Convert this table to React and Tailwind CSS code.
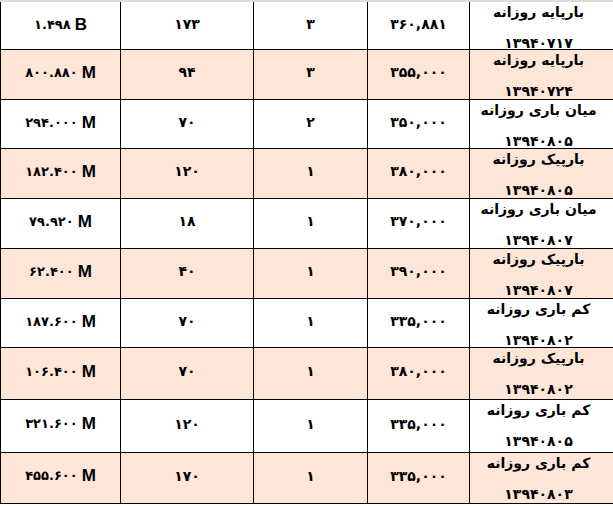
const rows = [
  ["۱.۴۹۸", "B", "۱۷۳", "۳", "۳۶۰,۸۸۱", "بارپایه روزانه", "۱۳۹۴۰۷۱۷", 48],
  ["۸۰۰.۸۸۰", "M", "۹۴", "۳", "۳۵۵,۰۰۰", "بارپایه روزانه", "۱۳۹۴۰۷۲۴", 50],
  ["۲۹۴.۰۰۰", "M", "۷۰", "۲", "۳۵۰,۰۰۰", "میان باری روزانه", "۱۳۹۴۰۸۰۵", 49],
  ["۱۸۲.۴۰۰", "M", "۱۲۰", "۱", "۳۸۰,۰۰۰", "بارپیک روزانه", "۱۳۹۴۰۸۰۵", 50],
  ["۷۹.۹۲۰", "M", "۱۸", "۱", "۳۷۰,۰۰۰", "میان باری روزانه", "۱۳۹۴۰۸۰۷", 50],
  ["۶۲.۴۰۰", "M", "۴۰", "۱", "۳۹۰,۰۰۰", "بارپیک روزانه", "۱۳۹۴۰۸۰۷", 50],
  ["۱۸۷.۶۰۰", "M", "۷۰", "۱", "۳۳۵,۰۰۰", "کم باری روزانه", "۱۳۹۴۰۸۰۲", 49],
  ["۱۰۶.۴۰۰", "M", "۷۰", "۱", "۳۸۰,۰۰۰", "بارپیک روزانه", "۱۳۹۴۰۸۰۲", 52],
  ["۳۲۱.۶۰۰", "M", "۱۲۰", "۱", "۳۳۵,۰۰۰", "کم باری روزانه", "۱۳۹۴۰۸۰۵", 53],
  ["۴۵۵.۶۰۰", "M", "۱۷۰", "۱", "۳۳۵,۰۰۰", "کم باری روزانه", "۱۳۹۴۰۸۰۳", 51],
];

export default function App() {
  return (
    <div
      className="w-[613px] h-[506px] bg-white overflow-hidden text-black"
      style={{ fontFamily: '"DejaVu Sans", sans-serif' }}
    >
      <div className="h-[2px] bg-[#dcdcdc]" />
      {rows.map((r, i) => {
        const bg = i % 2 === 1 ? "bg-[#fde6d8]" : "bg-white";
        return (
          <div
            key={i}
            className={`grid grid-cols-[121px_133px_114px_102px_143px] border-b border-black ${bg}`}
            style={{ height: r[7] }}
          >
            <div className="border-l border-r border-black flex items-center justify-center gap-[4px] pb-[4px]" dir="ltr">
              <span className="text-[13px] font-bold tracking-[-0.5px]">{r[0]}</span>
              <span className="text-[17px] font-bold" style={{ fontFamily: '"Liberation Sans", Arial, sans-serif' }}>{r[1]}</span>
            </div>
            <div className="border-r border-black flex items-center justify-center text-[14px] font-bold pb-[4px]">
              {r[2]}
            </div>
            <div className="border-r border-black flex items-center justify-center text-[14px] font-bold pb-[4px]">
              {r[3]}
            </div>
            <div className="border-r border-black flex items-center justify-center text-[14px] font-bold tracking-[-0.3px] pb-[4px]" dir="ltr">
              {r[4]}
            </div>
            <div className="flex flex-col items-center text-[14px] font-bold pt-[2px] pr-[6px]" dir="rtl">
              <div className="leading-[16px] h-[16px] whitespace-nowrap">{r[5]}</div>
              <div className="leading-[16px] h-[16px] mt-[15px] whitespace-nowrap tracking-[-0.3px]">{r[6]}</div>
            </div>
          </div>
        );
      })}
    </div>
  );
}
